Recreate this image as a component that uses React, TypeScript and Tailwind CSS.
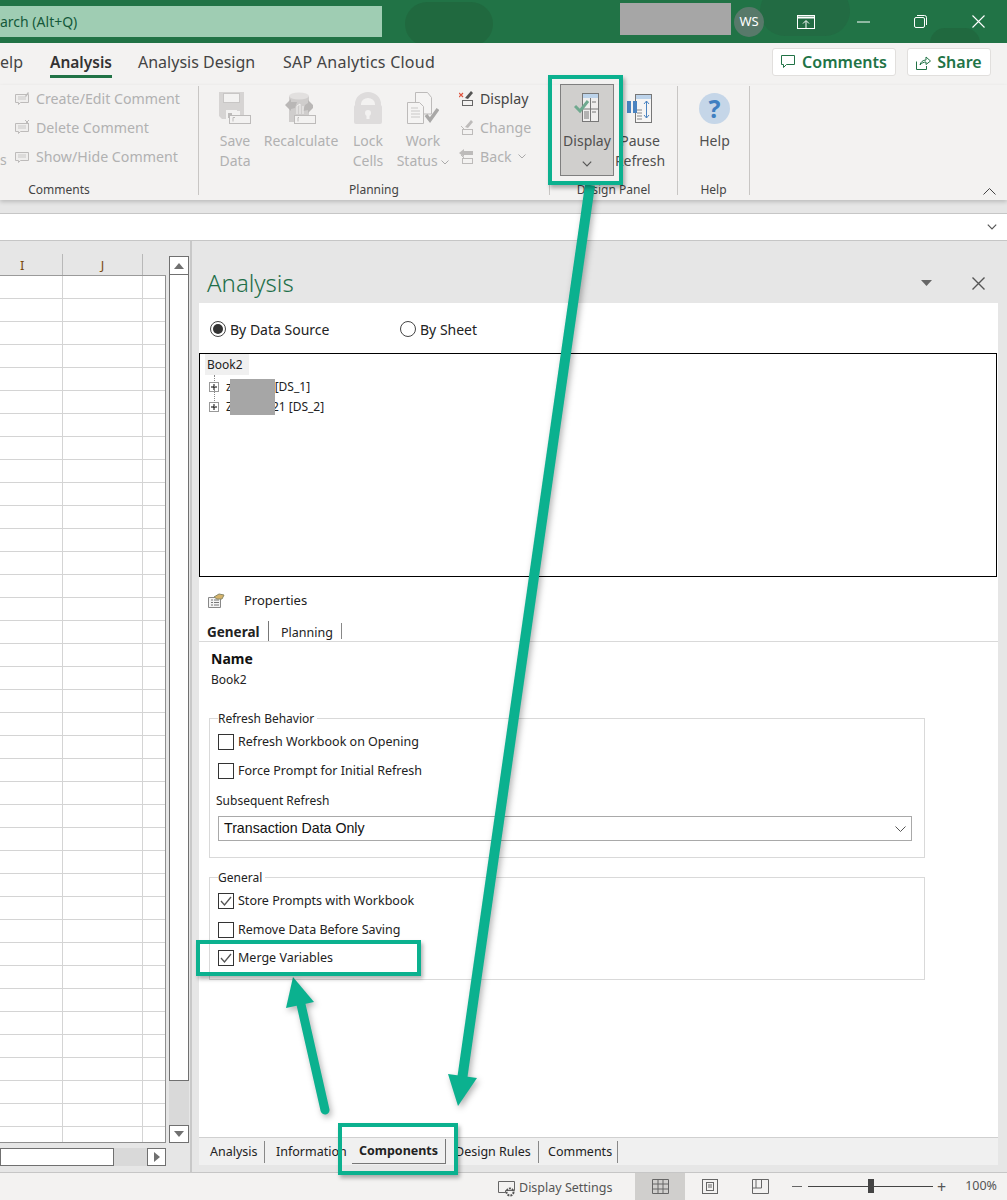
import type { ReactNode } from "react";

const gray = "#bdbbba";

// ribbon icons, all drawn small
const SaveIcon = () => (
  <svg width="32" height="32" viewBox="0 0 32 32">
    <path d="M0 0h25v24h-4v-5H8v8H3l-3-3z" fill="#d6d4d3" />
    <rect x="4.500" y="1.500" width="16" height="9" fill="#f3f2f1" stroke="#c8c6c5" />
    <rect x="7" y="18" width="11" height="10" fill="#f3f2f1" />
    <rect x="9" y="21" width="4" height="5" fill={gray} />
    <rect x="10.500" y="23.500" width="21" height="8" fill="#f3f2f1" stroke={gray} />
    <path d="M14 29.500v-4h2" stroke={gray} fill="none" />
  </svg>
);

const RecalcIcon = () => (
  <svg width="32" height="32" viewBox="0 0 32 32">
    <rect x="4" y="4" width="20" height="26" fill="#cfcdcc" />
    <ellipse cx="14" cy="4" rx="10" ry="3.500" fill="#e2e0df" />
    <path d="M0 13l6-6v3h6l-2 6-4 1v2z" fill="#b9b7b6" />
    <path d="M28 13l-5-5v3l-3 2-2 6 5-1v3l5-5z" fill="#b9b7b6" />
    <path d="M12 22v-8l3-2v10M18 14v8" stroke="#f3f2f1" fill="none" />
    <rect x="9.500" y="23.500" width="21" height="8" fill="#f3f2f1" stroke={gray} />
    <path d="M13 29.500v-4h1" stroke={gray} fill="none" />
  </svg>
);

const LockIcon = () => (
  <svg width="28" height="32" viewBox="0 0 28 32">
    <path d="M1 15V12a13 12 0 0 1 26 0v3h-6v-3a7 6 0 0 0-14 0v3z" fill="#dedcdc" />
    <rect x="0" y="13" width="28" height="19" rx="2" fill="#dedcdc" />
    <circle cx="14" cy="21" r="3" fill="#f3f2f1" />
    <rect x="12.500" y="21" width="3" height="6" fill="#f3f2f1" />
  </svg>
);

const WorkIcon = () => (
  <svg width="32" height="32" viewBox="0 0 32 32">
    <path d="M8.500.500h12l4 5V22h-16z" fill="#f5f4f3" stroke={gray} />
    <path d="M.500 10.500h12l4 4v17H.500z" fill="#f5f4f3" stroke={gray} />
    <path d="M4 16h7M4 19h9M4 22h9M4 25h9" stroke="#c9c8c7" />
    <path d="M19 23l4 5 8-11" stroke="#a9a8a7" strokeWidth="3.500" fill="none" />
  </svg>
);

const CommentIcon = ({ kind }: { kind: "edit" | "del" | "show" }) => (
  <svg width="15" height="15" viewBox="0 0 15 15">
    <path d="M.5 3.500h13v8h-8l-2 2v-2h-3z" fill="#efeeed" stroke={gray} />
    <path d="M3 6h8M3 8h8" stroke="#c9c8c7" />
    {kind === "edit" && <path d="M10 5l3-4 1 1-3 4z" fill={gray} />}
    {kind === "del" && <path d="M10 0l4 4M14 0l-4 4" stroke={gray} />}
  </svg>
);

const PenBox = ({ red, back }: { red?: boolean; back?: boolean }) => (
  <svg width="15" height="15" viewBox="0 0 15 15">
    {back ? (
      <path d="M0 4l5-4v2h9v4H5v2z" fill={gray} />
    ) : (
      <path d="M6 7l6-7 2 2-5 6z" fill={red ? "#555" : gray} />
    )}
    <rect x="3.500" y="9.500" width="10" height="5" fill="#f3f2f1" stroke={red ? "#666" : gray} />
    {red ? <path d="M0 2l4 4M4 2L0 6" stroke="#e0533d" strokeWidth="1.200" /> : <path d="M2 6l3 3" stroke={gray} />}
  </svg>
);

const PanelIcon = () => (
  <svg width="26" height="29" viewBox="0 0 26 29">
    <rect x="8.500" y=".5" width="16" height="28" fill="#efeeed" stroke="#777" />
    <rect x="9" y="1" width="15" height="4" fill="#bcd3ea" />
    <path d="M16.500 5v23M9 16h15M18 9h4M18 19h4M10 19h5M10 21h5M10 23h5M10 25h5" stroke="#777" />
    <path d="M1 13l5 5 8-10" stroke="#6fa98f" strokeWidth="3" fill="none" />
  </svg>
);

const PauseIcon = () => (
  <svg width="26" height="29" viewBox="0 0 26 29">
    <rect x="8.500" y=".5" width="16" height="28" fill="#f6f5f4" stroke="#777" />
    <rect x="9" y="1" width="15" height="4" fill="#bcd3ea" />
    <path d="M9 16h6M10 19h5M10 22h5M10 25h5" stroke="#888" />
    <rect x="0" y="7" width="4" height="12" fill="#4a83c0" />
    <rect x="6" y="7" width="4" height="12" fill="#4a83c0" />
    <path d="M19.500 7v17M17 10l2.500-3 2.500 3M17 21l2.500 3 2.500-3" stroke="#4a83c0" fill="none" />
  </svg>
);

const LargeBtn = ({ w, ml, icon, lines, dim }: { w: number; ml: string; icon: ReactNode; lines: ReactNode[]; dim?: boolean }) => (
  <div className={`flex flex-col items-center pt-[6px] ${ml} ${dim ? "text-[#b1b1b1]" : "text-[#505050]"}`} style={{ width: w }}>
    <div className="flex h-[32px] items-center justify-center">{icon}</div>
    <div className="mt-[7px] text-center text-[14px] leading-[20px] whitespace-nowrap">
      {lines.map((l, i) => (
        <div key={i}>{l}</div>
      ))}
    </div>
  </div>
);

const SmallRow = ({ icon, text, dim }: { icon: ReactNode; text: ReactNode; dim?: boolean }) => (
  <div className={`flex h-[29px] items-center gap-[6px] text-[14.2px] whitespace-nowrap ${dim ? "text-[#b1b1b1]" : "text-[#444]"}`}>
    {icon}
    {text}
  </div>
);

const GroupLabel = ({ text, className = "" }: { text: string; className?: string }) => (
  <div className={`mt-[1px] h-[16px] shrink-0 text-center text-[12px] leading-[16px] text-[#444] ${className}`}>{text}</div>
);

const Chevron = ({ c = "#777", big }: { c?: string; big?: boolean }) => (
  <svg width={big ? 10 : 8} height={big ? 6 : 5} viewBox="0 0 8 5" className="inline-block align-middle">
    <path d="M.5.5L4 4 7.500.5" stroke={c} fill="none" />
  </svg>
);

const Check = ({ on }: { on?: boolean }) => (
  <div className="flex h-[16px] w-[16px] shrink-0 items-center justify-center border border-[#333] bg-white">
    {on && (
      <svg width="12" height="10" viewBox="0 0 12 10">
        <path d="M1 5l3.500 4L11 1" stroke="#555" strokeWidth="1.300" fill="none" />
      </svg>
    )}
  </div>
);

const CheckRow = ({ on, label, className }: { on?: boolean; label: string; className: string }) => (
  <div className={`flex h-[16px] items-center gap-[4px] ${className}`}>
    <Check on={on} />
    <span className="text-[12.5px] whitespace-nowrap text-[#222]">{label}</span>
  </div>
);

const Plus = () => (
  <svg width="10" height="10" viewBox="0 0 10 10">
    <rect x=".5" y=".5" width="9" height="9" fill="#fff" stroke="#999" />
    <path d="M2 5h6M5 2v6" stroke="#000" />
  </svg>
);

const rows = Array.from({ length: 38 }, (_, i) => i);

export default function App() {
  return (
    <div className="relative h-[1200px] w-[1007px] overflow-hidden bg-[#e6e6e6] font-['Noto_Sans',sans-serif]">
      {/* title bar */}
      <div className="relative flex h-[43px] items-center overflow-hidden bg-[#217346]">
        <div className="absolute left-[405px] top-[2px] h-[44px] w-[88px] rounded-full bg-[#20693f]" />
        <div className="absolute left-[760px] top-[-14px] h-[50px] w-[90px] rounded-full bg-[#226b43]" />
        <div className="absolute left-[930px] top-[28px] h-[30px] w-[50px] rounded-full bg-[#20693f]" />
        <div className="relative flex h-[31px] w-[382px] items-center overflow-hidden bg-[#9fcdb3]">
          <span className="text-[14px] whitespace-nowrap text-[#14593a]">arch (Alt+Q)</span>
        </div>
        <div className="relative mb-[5px] ml-[238px] h-[32px] w-[111px] bg-[#a6a6a6]" />
        <div className="relative ml-[3px] flex h-[30px] w-[30px] items-center justify-center rounded-full bg-[#58796a] text-[13px] text-white">WS</div>
        <svg className="relative ml-[33px]" width="18" height="14" viewBox="0 0 18 14">
          <rect x=".5" y=".5" width="17" height="13" fill="none" stroke="#fff" />
          <path d="M0 2.500h18" stroke="#fff" strokeWidth="2" />
          <path d="M9 13V6M6 8.500L9 5.500l3 3" stroke="#fff" fill="none" />
        </svg>
        <svg className="relative ml-[42px]" width="13" height="2" viewBox="0 0 13 2">
          <path d="M0 1h13" stroke="#fff" />
        </svg>
        <svg className="relative ml-[44px]" width="13" height="13" viewBox="0 0 13 13">
          <rect x=".5" y="2.500" width="10" height="10" rx="1.500" fill="none" stroke="#fff" />
          <path d="M3 .5h7.500a2 2 0 0 1 2 2V10" fill="none" stroke="#fff" />
        </svg>
        <svg className="relative ml-[45px]" width="13" height="13" viewBox="0 0 13 13">
          <path d="M.5.5l12 12M12.500.5l-12 12" stroke="#fff" strokeWidth="1.100" />
        </svg>
      </div>

      {/* tab row */}
      <div className="flex h-[42px] items-start bg-[#f3f2f1] pt-[5px] text-[#444]">
        <div className="flex text-[16px] leading-[28px]">
          <span className="w-[50px]">elp</span>
          <span className="relative w-[88px] text-[15.5px] font-semibold text-[#333]">
            Analysis
            <span className="absolute left-0 top-[27px] h-[3px] w-[62px] bg-[#217346]" />
          </span>
          <span className="w-[145px]">Analysis Design</span>
          <span className="tracking-[0.25px]">SAP Analytics Cloud</span>
        </div>
        <div className="ml-auto mr-[16px] flex gap-[11px]">
          <div className="flex h-[28px] w-[124px] items-center justify-center gap-[6px] rounded-[3px] border border-[#e1dfdd] bg-white text-[16px] font-semibold text-[#217346]">
            <svg width="15" height="14" viewBox="0 0 15 14">
              <path d="M.5.5h13v9h-8l-3 3v-3h-2z" fill="none" stroke="#217346" />
            </svg>
            Comments
          </div>
          <div className="flex h-[28px] w-[84px] items-center justify-center gap-[6px] rounded-[3px] border border-[#e1dfdd] bg-white text-[16px] font-semibold text-[#217346]">
            <svg width="15" height="15" viewBox="0 0 15 15">
              <path d="M.5 6.500v8h10V11M4 10c.5-3 3-5 6-5V2l4.500 4L10 9.500V7C8 7 5.500 8 4 10z" fill="none" stroke="#217346" />
            </svg>
            Share
          </div>
        </div>
      </div>

      {/* ribbon */}
      <div className="relative z-10 flex h-[115px] bg-[#f3f2f1] shadow-[0_2px_4px_rgba(0,0,0,0.18)]">
        <div className="mb-[5px] mt-[1px] flex w-[199px] flex-col border-r border-[#c8c6c4] pl-[15px]">
          <div className="h-[95px] shrink-0">
            <div className="mt-[-2px]">
              <SmallRow dim icon={<CommentIcon kind="edit" />} text="Create/Edit Comment" />
              <SmallRow dim icon={<CommentIcon kind="del" />} text="Delete Comment" />
              <div className="ml-[-15px] flex items-center">
                <span className="mt-[5px] w-[15px] text-[14px] text-[#b1b1b1]">s</span>
                <SmallRow dim icon={<CommentIcon kind="show" />} text="Show/Hide Comment" />
              </div>
            </div>
          </div>
          <GroupLabel text="Comments" className="ml-[-15px] w-[118px]" />
        </div>

        <div className="mb-[5px] mt-[1px] flex w-[351px] flex-col border-r border-[#c8c6c4]">
          <div className="flex h-[95px] shrink-0 pl-[12px]">
            <LargeBtn dim w={48} ml="" icon={<SaveIcon />} lines={["Save", "Data"]} />
            <LargeBtn dim w={76} ml="ml-[4px]" icon={<RecalcIcon />} lines={["Recalculate"]} />
            <LargeBtn dim w={48} ml="ml-[5px]" icon={<LockIcon />} lines={["Lock", "Cells"]} />
            <LargeBtn
              dim
              w={56}
              ml="ml-[3px]"
              icon={<WorkIcon />}
              lines={[
                "Work",
                <>
                  Status <Chevron c="#aaa" />
                </>,
              ]}
            />
            <div className="ml-[8px] mt-[-2px]">
              <SmallRow icon={<PenBox red />} text="Display" />
              <SmallRow dim icon={<PenBox />} text="Change" />
              <SmallRow
                dim
                icon={<PenBox back />}
                text={
                  <>
                    Back <Chevron c="#aaa" />
                  </>
                }
              />
            </div>
          </div>
          <GroupLabel text="Planning" />
        </div>

        <div className="mb-[5px] mt-[1px] flex w-[128px] flex-col border-r border-[#c8c6c4]">
          <div className="flex h-[95px] shrink-0">
            <div className="ml-[10px] mt-[-2px] flex h-[92px] w-[54px] flex-col items-center border border-[#7f7f7f] bg-[#d0cfcd] pt-[8px] text-[#505050]">
              <PanelIcon />
              <div className="mt-[9px] text-[14px] leading-[20px]">Display</div>
              <div className="mt-[3px] leading-none">
                <Chevron c="#555" big />
              </div>
            </div>
            <LargeBtn w={52} ml="" icon={<PauseIcon />} lines={["Pause", "Refresh"]} />
          </div>
          <GroupLabel text="Design Panel" />
        </div>

        <div className="mb-[5px] mt-[1px] flex w-[72px] flex-col border-r border-[#c8c6c4]">
          <div className="flex h-[95px] shrink-0 justify-center">
            <LargeBtn
              w={60}
              ml="ml-[2px]"
              icon={
                <div className="flex h-[31px] w-[31px] items-center justify-center rounded-full bg-[#c5d6e8] text-[25px] leading-none font-bold text-[#3f7fc1]">?</div>
              }
              lines={["Help"]}
            />
          </div>
          <GroupLabel text="Help" />
        </div>

        <div className="flex flex-1 items-end justify-end pb-[5px] pr-[11px]">
          <svg width="13" height="7" viewBox="0 0 13 7">
            <path d="M.5 6.500l6-6 6 6" stroke="#444" fill="none" />
          </svg>
        </div>
      </div>

      {/* formula bar */}
      <div className="mt-[13px] flex h-[28px] items-center justify-end border-b border-t border-[#c6c6c6] bg-white pr-[10px]">
        <Chevron c="#555" big />
      </div>

      {/* main area */}
      <div className="flex h-[931px]">
        {/* sheet */}
        <div className="flex w-[192px] border-r-2 border-[#c8c8c8] pt-[13px]">
          <div className="w-[166px]">
            <div className="flex h-[22px] border-b border-[#9a9a9a] text-[13px] leading-[22px] text-[#7a4a10]">
              <div className="w-[63px] border-r border-[#b8b8b8] pl-[20px]">I</div>
              <div className="w-[80px] border-r border-[#b8b8b8] text-center">J</div>
            </div>
            <div className="h-[867px] overflow-hidden border-b border-r border-[#8f8f8f] bg-white">
              {rows.map((r) => (
                <div key={r} className="flex h-[23px] border-b border-[#d4d4d4]">
                  <div className="w-[63px] border-r border-[#d4d4d4]" />
                  <div className="w-[80px] border-r border-[#d4d4d4]" />
                </div>
              ))}
            </div>
            <div className="mt-[5px] flex h-[18px]">
              <div className="w-[114px] border border-[#707070] bg-white" />
              <div className="w-[33px] bg-[#d9d9d9]" />
              <div className="flex w-[19px] items-center justify-center border border-[#707070] bg-white">
                <svg width="6" height="10" viewBox="0 0 6 10">
                  <path d="M0 0l6 5-6 5z" fill="#707070" />
                </svg>
              </div>
            </div>
          </div>
          <div className="ml-[3px] mt-[2px] flex h-[887px] w-[20px] flex-col">
            <div className="flex h-[19px] items-center justify-center border border-[#707070] bg-white">
              <svg width="10" height="6" viewBox="0 0 10 6">
                <path d="M0 6l5-6 5 6z" fill="#707070" />
              </svg>
            </div>
            <div className="h-[806px] border border-t-0 border-[#707070] bg-white" />
            <div className="flex-1 bg-[#d9d9d9]" />
            <div className="flex h-[18px] items-center justify-center border border-[#707070] bg-white">
              <svg width="10" height="6" viewBox="0 0 10 6">
                <path d="M0 0l5 6 5-6z" fill="#707070" />
              </svg>
            </div>
          </div>
        </div>

        {/* task pane */}
        <div className="flex w-[806px] flex-col pl-[7px]">
          <div className="flex h-[62px] items-center pl-[8px] pt-[22px]">
            <span className="text-[24px] font-light text-[#1f6f4a]">Analysis</span>
            <div className="ml-auto mr-[13px] flex items-center gap-[40px]">
              <svg width="11" height="6" viewBox="0 0 11 6">
                <path d="M0 0h11L5.500 6z" fill="#666" />
              </svg>
              <svg width="13" height="13" viewBox="0 0 13 13">
                <path d="M.5.5l12 12M12.500.5l-12 12" stroke="#555" strokeWidth="1.400" />
              </svg>
            </div>
          </div>

          <div className="flex h-[835px] flex-col border-b border-[#d0d0d0] bg-white">
            <div className="flex h-[50px] shrink-0 items-center pl-[11px] pt-[2px] text-[14px] text-[#222]">
              <div className="flex h-[16px] w-[16px] items-center justify-center rounded-full border border-[#444]">
                <div className="h-[10px] w-[10px] rounded-full bg-[#333]" />
              </div>
              <span className="ml-[4px] w-[170px]">By Data Source</span>
              <div className="h-[16px] w-[16px] rounded-full border border-[#444]" />
              <span className="ml-[4px]">By Sheet</span>
            </div>

            <div className="relative h-[224px] w-[798px] border border-black pl-[5px] text-[12px] text-[#222]">
              <div className="flex h-[21px] w-[44px] items-center bg-[#f0f0f0] pl-[2px]">Book2</div>
              <div className="absolute left-[14px] top-[21px] h-[32px] border-l border-dotted border-[#888]" />
              <div className="mt-[2px] flex h-[20px] items-center pl-[4px]">
                <Plus />
                <span className="ml-[7px]">z</span>
                <span className="ml-[43px]">[DS_1]</span>
              </div>
              <div className="flex h-[20px] items-center pl-[4px]">
                <Plus />
                <span className="ml-[7px]">Z</span>
                <span className="ml-[39px]">21 [DS_2]</span>
              </div>
              <div className="absolute left-[30px] top-[25px] h-[36px] w-[45px] bg-[#a6a6a6]" />
            </div>

            <div className="flex h-[44px] items-center pl-[9px] pt-[3px] text-[13px] text-[#222]">
              <svg width="17" height="15" viewBox="0 0 17 15">
                <path d="M.5 4.500h12v10H.5z" fill="#f4f4f4" stroke="#888" />
                <path d="M3 7h2M6 7h5M3 9.500h2M6 9.500h5M3 12h2M6 12h5" stroke="#777" />
                <path d="M6 4l5-3 5 1-2 4-5 0z" fill="#d6b36a" stroke="#8a8a6a" />
              </svg>
              <span className="ml-[19px]">Properties</span>
            </div>

            <div className="flex h-[21px] items-end border-b border-[#d9d9d9] pl-[8px] text-[#222]">
              <span className="h-[20px] w-[62px] border-r border-[#777] text-[13.5px] font-bold leading-[23px] whitespace-nowrap">General</span>
              <span className="mb-[2px] ml-[12px] h-[16px] w-[61px] border-r border-[#888] text-[12.5px] leading-[19px]">Planning</span>
            </div>

            <div className="pl-[12px] pt-[7px] text-[#111]">
              <div className="h-[20px] text-[14px] font-bold leading-[20px]">Name</div>
              <div className="h-[22px] text-[12px] leading-[22px] text-[#222]">Book2</div>
            </div>

            <fieldset className="ml-[10px] mt-[19px] h-[148px] w-[716px] border border-[#d9d9d9] pl-[8px]">
              <legend className="h-[16px] pr-[3px] text-[12px] leading-[18px] text-[#222]">Refresh Behavior</legend>
              <CheckRow className="mt-[8px]" label="Refresh Workbook on Opening" />
              <CheckRow className="mt-[13px]" label="Force Prompt for Initial Refresh" />
              <div className="ml-[-2px] mt-[12px] h-[18px] text-[12px] leading-[20px] text-[#222]">Subsequent Refresh</div>
              <div className="mt-[7px] flex h-[25px] w-[694px] items-center justify-between border border-[#a9a9a9] pl-[5px] pr-[5px] pt-[1px] font-['Liberation_Sans',sans-serif] text-[14.2px] text-[#111]">
                Transaction Data Only
                <svg width="11" height="6" viewBox="0 0 11 6">
                  <path d="M.5.5l5 5 5-5" stroke="#555" fill="none" />
                </svg>
              </div>
            </fieldset>

            <fieldset className="ml-[10px] mt-[11px] h-[111px] w-[716px] border border-[#d9d9d9] pl-[8px]">
              <legend className="h-[16px] pr-[3px] text-[12px] leading-[18px] text-[#222]">General</legend>
              <CheckRow on className="mt-[8px]" label="Store Prompts with Workbook" />
              <CheckRow className="mt-[13px]" label="Remove Data Before Saving" />
              <CheckRow on className="mt-[12px]" label="Merge Variables" />
            </fieldset>
          </div>

          <div className="flex h-[27px] items-center bg-[#f0f0f0] text-[12.5px] text-[#222]">
            <span className="h-[22px] w-[66px] border-r border-[#888] pl-[11px] leading-[22px]">Analysis</span>
            <span className="h-[22px] w-[87px] pl-[11px] leading-[22px] whitespace-nowrap">Information</span>
            <span className="h-[25px] w-[94px] border-b border-r border-[#777] text-center font-bold leading-[24px]">Components</span>
            <span className="h-[22px] w-[93px] border-r border-[#888] pl-[9px] leading-[22px] whitespace-nowrap">Design Rules</span>
            <span className="h-[22px] w-[79px] border-r border-[#888] pl-[9px] leading-[22px]">Comments</span>
          </div>
        </div>
      </div>

      {/* status bar */}
      <div className="flex h-[28px] items-center border-t border-[#c6c6c6] bg-[#f3f2f1] text-[12.5px] text-[#555]">
        <div className="ml-[498px] flex w-[137px] items-center gap-[2px] pt-[3px]">
          <svg width="19" height="17" viewBox="0 0 19 17">
            <path d="M.5 1.500h16v9h-9v2h-7z" fill="none" stroke="#666" />
            <circle cx="12" cy="12" r="3.500" fill="none" stroke="#555" strokeWidth="2" strokeDasharray="2 1" />
          </svg>
          Display Settings
        </div>
        <div className="flex h-[27px] w-[50px] items-center justify-center bg-[#d0cfcd]">
          <svg width="17" height="15" viewBox="0 0 17 15">
            <path d="M.5.500h16v14H.5zM.5 5h16M.5 10h16M6 .500v14M11 .500v14" fill="none" stroke="#666" />
          </svg>
        </div>
        <div className="flex w-[50px] justify-center">
          <svg width="16" height="15" viewBox="0 0 16 15">
            <rect x=".5" y=".5" width="15" height="14" fill="none" stroke="#666" />
            <rect x="4.500" y="3.500" width="7" height="8" fill="none" stroke="#666" />
            <path d="M6 6h4M6 8h4" stroke="#666" />
          </svg>
        </div>
        <div className="flex w-[50px] justify-center">
          <svg width="17" height="15" viewBox="0 0 17 15">
            <path d="M.5.500h16v14H.5zM.5 9h9M4 .500V9M9.500 .500V9" fill="none" stroke="#666" />
          </svg>
        </div>
        <div className="ml-[7px] h-px w-[10px] bg-[#666]" />
        <div className="relative ml-[6px] h-px w-[125px] bg-[#444]">
          <div className="absolute left-[60px] top-[-7px] h-[14px] w-[6px] bg-[#444]" />
        </div>
        <span className="ml-[4px] text-[16px] leading-none">+</span>
        <span className="ml-[19px] text-[12.5px]">100%</span>
      </div>

      {/* annotations on top of the screenshot */}
      <div className="pointer-events-none absolute inset-0 z-20">
        <svg className="absolute inset-0 drop-shadow-[2px_3px_3px_rgba(0,0,0,0.3)]" width="1007" height="1200" viewBox="0 0 1007 1200">
          <path d="M590 185L462 1080" stroke="#0bb18f" strokeWidth="10" fill="none" />
          <path d="M448 1074L477 1078L458 1106z" fill="#0bb18f" />
          <path d="M325 1110L300 1000" stroke="#0bb18f" strokeWidth="9" strokeLinecap="round" fill="none" />
          <path d="M293 977L286 1008L314 1002z" fill="#0bb18f" />
        </svg>
        <div className="absolute left-[548px] top-[75px] h-[110px] w-[75px] border-4 border-[#0bb18f] shadow-[2px_3px_4px_rgba(0,0,0,0.3)]" />
        <div className="absolute left-[196px] top-[940px] h-[36px] w-[225px] border-4 border-[#0bb18f] shadow-[2px_3px_4px_rgba(0,0,0,0.3)]" />
        <div className="absolute left-[338px] top-[1123px] h-[52px] w-[120px] border-4 border-[#0bb18f] shadow-[2px_3px_4px_rgba(0,0,0,0.3)]" />
      </div>
    </div>
  );
}
